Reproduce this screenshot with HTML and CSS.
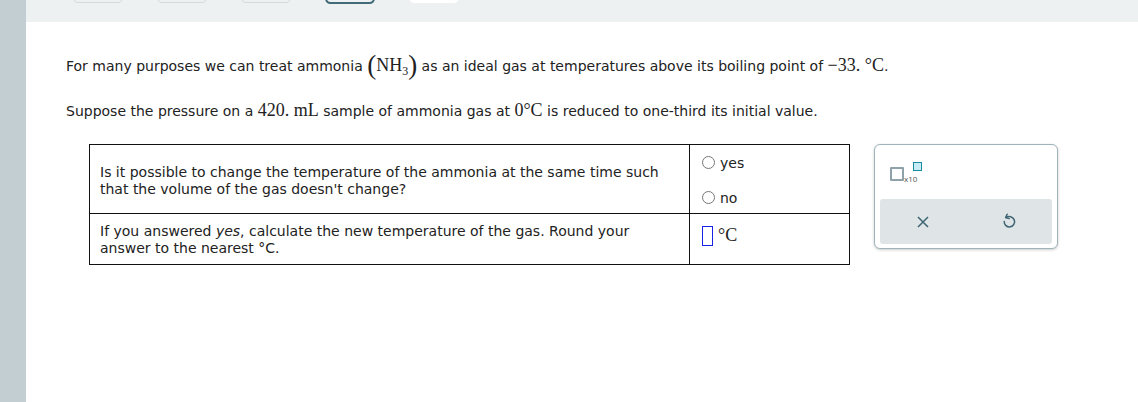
FILE: index.html
```html
<!DOCTYPE html>
<html>
<head>
<meta charset="utf-8">
<link rel="stylesheet" href="styles.css">
</head>
<body>
<div class="app">
  <aside class="side"></aside>
  <main class="main">
    <div class="topbar">
      <span class="pill"></span>
      <span class="pill"></span>
      <span class="pill"></span>
      <span class="pill active"></span>
      <span class="pill blank"></span>
    </div>
    <div class="content">
      <p class="line1">For many purposes we can treat ammonia <span class="math"><span class="paren">(</span>NH<sub>3</sub><span class="paren">)</span></span> as an ideal gas at temperatures above its boiling point of <span class="math">&minus;33. °C</span>.</p>
      <p class="line2">Suppose the pressure on a <span class="math">420. mL</span> sample of ammonia gas at <span class="math">0°C</span> is reduced to one-third its initial value.</p>
      <div class="work">
        <table class="qtable">
          <tr class="r1">
            <td class="q">Is it possible to change the temperature of the ammonia at the same time such that the volume of the gas doesn't change?</td>
            <td class="a">
              <div class="radio"><span class="dot"></span>yes</div>
              <div class="radio"><span class="dot"></span>no</div>
            </td>
          </tr>
          <tr class="r2">
            <td class="q">If you answered <i>yes</i>, calculate the new temperature of the gas. Round your answer to the nearest °C.</td>
            <td class="a"><div class="entry"><span class="box"></span><span class="unit">°C</span></div></td>
          </tr>
        </table>
        <div class="panel">
          <div class="tools">
            <span class="sci"><span class="sq"></span><span class="x10">x10</span><span class="exp"></span></span>
          </div>
          <div class="actions">
            <svg class="ic" width="14" height="14" viewBox="0 0 14 14"><path d="M2 2 L12 12 M12 2 L2 12" stroke="#3e6473" stroke-width="1.5" fill="none"/></svg>
            <svg class="ic" width="16" height="18" viewBox="0 0 16 18"><path d="M5.2 4.6 A5.2 5.2 0 1 1 3.2 8.4" stroke="#3e6473" stroke-width="1.5" fill="none" stroke-linecap="round"/><path d="M6.2 1.2 L4.6 4.6 L8.2 5.6" stroke="#3e6473" stroke-width="1.5" fill="none" stroke-linecap="round" stroke-linejoin="round"/></svg>
          </div>
        </div>
      </div>
    </div>
  </main>
</div>
</body>
</html>
```
FILE: styles.css
```css
* { box-sizing: border-box; }
html, body { margin: 0; padding: 0; background: #fff; }
body { font-family: "DejaVu Sans", Verdana, sans-serif; font-size: 14px; color: #222; }
.app { display: flex; width: 1138px; height: 402px; overflow: hidden; }
.side { width: 26px; flex: none; background: #c3ced3; }
.main { flex: 1; }
.topbar { height: 22px; background: #eef1f2; display: flex; gap: 34px; padding-left: 47px; align-items: flex-start; }
.pill { display: block; width: 50px; height: 10px; margin-top: -7px; border-radius: 8px; border: 1px solid #d3dadd; background: #eef1f2; }
.pill.active { border: 2px solid #426b79; height: 11px; }
.pill.blank { background: #fff; border-color: #fff; }
.content { padding-left: 40px; }
p { margin: 0; }
.line1 { margin-top: 31px; height: 24px; line-height: 24px; }
.line2 { margin-top: 23px; height: 20px; line-height: 20px; }
.math { font-family: "Liberation Serif", "Times New Roman", serif; font-size: 18px; }
.paren { font-size: 27px; vertical-align: -3px; line-height: 0; font-weight: 300; }
sub { font-size: 12px; vertical-align: -4px; line-height: 0; }
.work { display: flex; align-items: flex-start; margin-top: 24px; padding-left: 23px; }
.qtable { border-collapse: collapse; width: 761px; }
.qtable td { border: 1px solid #111; vertical-align: top; }
.q { width: 600px; padding: 0 10px; line-height: 17px; }
.r1 td { height: 69px; }
.r1 .q { padding-top: 19px; }
.r2 td { height: 51px; }
.r2 .q { padding-top: 9px; }
.a { padding-left: 12px; }
.radio { display: flex; align-items: center; gap: 5px; height: 17px; }
.r1 .a { padding-top: 9px; }
.radio + .radio { margin-top: 18px; }
.dot { width: 13px; height: 13px; border: 1px solid #777; border-radius: 50%; display: inline-block; }
.entry { display: flex; align-items: center; gap: 5px; padding-top: 10px; }
.box { width: 11px; height: 20px; border: 1px solid #1a22e6; display: inline-block; }
.unit { font-family: "Liberation Serif", serif; font-size: 18px; }
.panel { margin-left: 24px; width: 184px; height: 105px; border: 1px solid #9fb3bb; border-radius: 6px; box-shadow: 0 1px 3px rgba(0,0,0,0.2); padding: 0 5px; background: #fff; }
.tools { height: 54px; padding: 16px 0 0 10px; }
.sci { position: relative; display: inline-block; width: 40px; height: 22px; }
.sq { position: absolute; left: 0; top: 6px; width: 14px; height: 14px; border: 2px solid #8fa2a9; border-radius: 1px; }
.x10 { position: absolute; left: 14px; top: 12px; font-family: "Open Sans", sans-serif; font-size: 8px; color: #555; }
.exp { position: absolute; left: 23px; top: 1px; width: 9px; height: 9px; border: 1.5px solid #1a8aa3; background: #c8ecf3; }
.actions { height: 45px; background: #dfe5e7; border-radius: 3px; display: flex; justify-content: space-around; align-items: center; }
```
